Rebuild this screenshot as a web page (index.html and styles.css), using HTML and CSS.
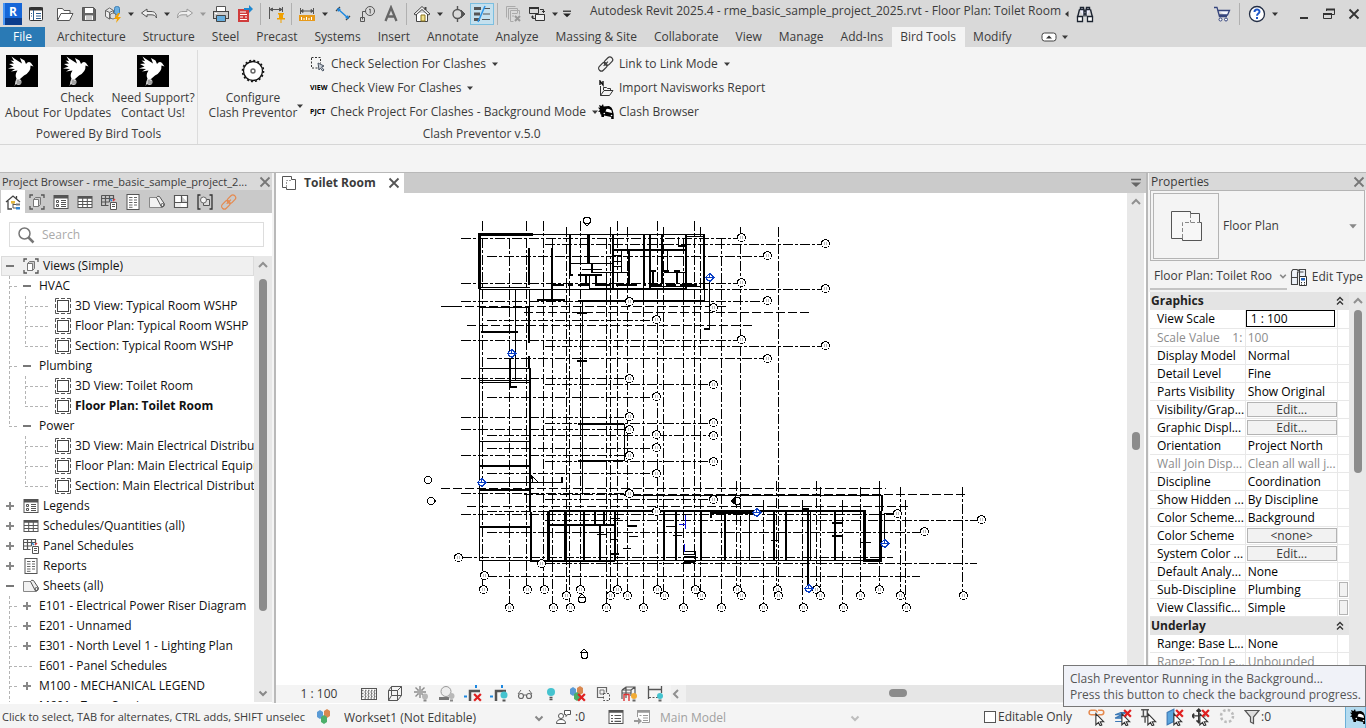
FILE: index.html
```
<!DOCTYPE html>
<html lang="en">
<head>
<meta charset="utf-8">
<title>Autodesk Revit 2025.4</title>
<link rel="stylesheet" href="styles.css">
</head>
<body>
<svg class="sprite" aria-hidden="true">
  <symbol id="caret" viewBox="0 0 8 8"><path d="M1 2.5h6L4 6z" fill="currentColor"/></symbol>
  <symbol id="chev-down" viewBox="0 0 10 10"><path d="M1.5 3.5 5 7l3.500-3.500" fill="none" stroke="#888" stroke-width="2"/></symbol>
  <symbol id="chev-up" viewBox="0 0 10 10"><path d="M1 7l4-4 4 4" fill="none" stroke="#909090" stroke-width="2"/></symbol>
  <symbol id="chev-left" viewBox="0 0 10 10"><path d="M7 1 3 5l4 4" fill="none" stroke="#909090" stroke-width="2"/></symbol>
  <symbol id="x" viewBox="0 0 12 12"><path d="M1.500 1.500l9 9M10.500 1.500l-9 9" fill="none" stroke="currentColor" stroke-width="1.800"/></symbol>
  <symbol id="cross" viewBox="0 0 16 16"><path d="M9 8l6 6M15 8l-6 6" stroke="#e02020" stroke-width="2" fill="none"/></symbol>
  <symbol id="cursor" viewBox="0 0 16 16"><path d="M7 5v10l2.300-2.200 1.500 3 1.500-.7-1.400-2.900h3z" fill="#fff" stroke="#333"/></symbol>
  <symbol id="bird" viewBox="0 0 32 32">
    <rect width="32" height="32" fill="#000"/>
    <path d="M5.500 1.500 9 4 16 8.500 14 3 18.500 5.500 20 9Q22.500 5.500 25 8L27.500 11.500 24.500 10.500Q25 17 18 20.500L14 24 10.500 28 8.500 31 10.500 23.500Q8.500 20 11.500 15.500L5 16.500 9 14 2 13.500 7.500 11.500 3 9 8 8.500 4.500 5.500 8 6z" fill="#fff"/>
    <circle cx="12.500" cy="27" r="3" fill="#ccc"/><path d="M12 25v4M14 26v3" stroke="#777"/>
  </symbol>
  <symbol id="i-panel" viewBox="0 0 16 16"><rect x="1.500" y="1.500" width="13" height="13" rx="1" fill="#fff" stroke="#333"/><path d="M1 3h14" stroke="#333" stroke-width="3"/><path d="M5.500 4v10M8 7.500h5M8 10h5M8 12.500h5M3 7.500h1M3 10h1" stroke="#2a5d90"/></symbol>
  <symbol id="i-open" viewBox="0 0 18 18"><path d="M1.500 15.500v-12h5l1.500 2h6v3M1.500 15.500 5 8.500h12l-3.500 7z" fill="#fff" stroke="#555"/></symbol>
  <symbol id="i-save" viewBox="0 0 16 16"><path d="M1.500 1.500h11l2 2v11h-13z" fill="#666" stroke="#555"/><path d="M4 2h8v5H4zM4 9.500h8V14H4z" fill="#fff"/><path d="M5 11h6M5 13h6" stroke="#999"/></symbol>
  <symbol id="i-sync" viewBox="0 0 18 18"><path d="M1.500 5.500l4-2.500 4 2.500v6l-4 2.500-4-2.500zM1.500 5.500l4 2 4-2M5.500 7.500V14" fill="#eee" stroke="#666"/><rect x="10.500" y="1.500" width="5" height="8" rx="2" fill="#6aaee0" stroke="#3c7fb5"/><circle cx="9" cy="11" r="3" fill="#ddd" stroke="#777"/><path d="M14 8l-4 6h3l-1 4 5-6h-3l2-4z" fill="#f5a300"/></symbol>
  <symbol id="i-undo" viewBox="0 0 18 18"><path d="M1.500 8 7 4v2.500h4c4 0 5.500 2 5.500 6.500-1.200-2.500-2.500-3.200-5.500-3.200H7V12z" fill="#eee" stroke="currentColor"/></symbol>
  <symbol id="i-print" viewBox="0 0 18 18"><path d="M4.500 7V1.500h9V7" fill="#fff" stroke="#555"/><rect x="1.500" y="6.500" width="15" height="7" fill="#ccc" stroke="#444"/><path d="M4.500 10.500h9v6h-9z" fill="#67aede" stroke="#444"/><path d="M3 8.500h2" stroke="#fff"/></symbol>
  <symbol id="i-pdf" viewBox="0 0 18 18"><path d="M2 4h11v13H2z" fill="#d03c3c"/><path d="M4 7h6M4 9.500h4M4 12h3M4 14.500h7M9 12h2M8 9.500h3" stroke="#fff" stroke-width="1.200"/><path d="M8 3h5V0l4 4-4 4V5H8z" fill="#1e88d0"/></symbol>
  <symbol id="i-align" viewBox="0 0 18 18"><path d="M2.500 2v12M15.500 2v5M3 4.500h12M3 4.500l2.500-1.500v3zM15 4.500l-2.500-1.500v3z" fill="#555" stroke="#555"/><path d="M11 8h6v1.500h-1V13h2v1.500h-3.500V18h-1v-3.500H10V13h2V9.500h-1z" fill="#f0a000"/></symbol>
  <symbol id="i-measure" viewBox="0 0 18 18"><path d="M2.500 3v6M15.500 3v6M3 6h12M3 6l2-1.500v3zM15 6l-2-1.500v3z" fill="#555" stroke="#555"/><path d="M1 10h16v6H1z" fill="#e79a1a"/><path d="M3.500 12v3M6 13v2M8.500 12v3M11 13v2M13.500 12v3" stroke="#fff"/></symbol>
  <symbol id="i-dim" viewBox="0 0 18 18"><path d="M4 4l10 9" stroke="#1e88e0" stroke-width="1.500"/><path d="M2 6l4-4M12 15l4-4" stroke="#444" stroke-width="1.300"/><path d="M3 3l4 1-3 3zM15 14l-4-1 3-3z" fill="#1e88e0"/></symbol>
  <symbol id="i-tag" viewBox="0 0 18 18"><circle cx="12" cy="6" r="4.500" fill="none" stroke="#555"/><path d="M11 4.500l1.200-.5v4.500M7.500 6.500h-3v8M2.500 12.500h4v4h-4z" fill="none" stroke="#555"/></symbol>
  <symbol id="i-letter" viewBox="0 0 18 18"><path d="M3.500 16 9 2.500 14.500 16M5.500 11.500h7" fill="none" stroke="#666" stroke-width="2.300"/></symbol>
  <symbol id="i-home" viewBox="0 0 18 18"><path d="M3.500 8v8.500h11V8" fill="#fff" stroke="#444"/><path d="M1 9l8-7.500L17 9l-2 1-6-5.500L3 10z" fill="#eee" stroke="#444"/><path d="M12.500 2v3" stroke="#444" stroke-width="2"/><path d="M8 10h4v6H8z" fill="#f3e38c" stroke="#8a7420"/></symbol>
  <symbol id="i-section" viewBox="0 0 18 18"><circle cx="8.500" cy="9" r="4.500" fill="none" stroke="#555" stroke-width="1.400"/><path d="M8.500 1v3.500M8.500 13.500V17" stroke="#555" stroke-width="1.400"/><path d="M12 5l4 4-4 4 1-4z" fill="#555" stroke="#555"/></symbol>
  <symbol id="i-thin" viewBox="0 0 18 18"><path d="M1 3.500h7M1 9h6M1 14.500h6" stroke="#555" stroke-width="3"/><path d="M11 3.500h6M10 9h7M9 14.500h8" stroke="#555"/><path d="M12 1 5 17" stroke="#2a94e8" stroke-width="1.500"/></symbol>
  <symbol id="i-closewin" viewBox="0 0 18 18"><path d="M2.500 12.500v-11h9M4.500 14.500v-11h9v5M6.500 5.500h9v4M6.500 5.500v11h3M8 8.500h5M8 11h2" fill="none" stroke="#aaa"/><path d="M11 11l5 5M16 11l-5 5" stroke="#999" stroke-width="2"/></symbol>
  <symbol id="i-switch" viewBox="0 0 18 18"><path d="M1.500 2.500h9v6h-9z" fill="none" stroke="#333"/><path d="M1 3h10M7 10.500h10" stroke="#333" stroke-width="2"/><path d="M7.500 9.500h9v6h-9z" fill="#eee" stroke="#333"/><path d="M12 4.500h3.500V8M4.500 10.500v3H7M3 12h3M14 6.500h3" fill="none" stroke="#333"/></symbol>
  <symbol id="i-custom" viewBox="0 0 10 10"><path d="M0 1.500h10" stroke="#222" stroke-width="1.500"/><path d="M0 4.500h10L5 9z" fill="#222"/></symbol>
  <symbol id="i-bino" viewBox="0 0 18 18"><path d="M4.500 4V2.500h3V4M10.500 4V2.500h3V4M3.500 4.500h4.500v7M14.500 4.500H10v7M3.500 4.500l-2 8M14.500 4.500l2 8M8 6h2v3H8z" fill="#eef" stroke="#1c2430" stroke-width="1.400"/><path d="M1.500 11.500h5v5h-5zM11.500 11.500h5v5h-5z" fill="#fff" stroke="#1c2430" stroke-width="1.300"/></symbol>
  <symbol id="i-cart" viewBox="0 0 18 18"><path d="M1 2.500h3l2.500 9H14M5 5.500h11.500l-2 4.500H6.500" fill="#f5f7ff" stroke="#36457c" stroke-width="1.300"/><circle cx="7.500" cy="14.500" r="1.500" fill="#fff" stroke="#36457c"/><circle cx="13" cy="14.500" r="1.500" fill="#fff" stroke="#36457c"/></symbol>
  <symbol id="i-help" viewBox="0 0 18 18"><circle cx="9" cy="9" r="7.500" fill="#fff" stroke="#222d44" stroke-width="1.300"/><path d="M6.500 7c0-3.300 5-3.300 5-.3 0 1.800-2.500 1.900-2.500 4M9 12v2" fill="none" stroke="#1f57c8" stroke-width="2"/></symbol>
  <symbol id="i-restore" viewBox="0 0 14 14"><path d="M4.500 4V2.500h8v5H10" fill="none" stroke="#333"/><path d="M4 2.500h9M1 7h9" stroke="#333" stroke-width="2"/><path d="M1.500 6.500h8v5h-8z" fill="none" stroke="#333"/></symbol>
  <symbol id="i-min" viewBox="0 0 14 14"><path d="M3 11h8" stroke="#333" stroke-width="2"/></symbol>
  <symbol id="i-pill" viewBox="0 0 16 10"><rect x="1" y="1" width="14" height="8" rx="2.500" fill="#fff" stroke="#444"/><path d="M5 6.500h6L8 3.500z" fill="#333"/></symbol>
  <symbol id="i-gear" viewBox="0 0 24 24"><circle cx="12" cy="12" r="9.500" fill="#fff" stroke="#111" stroke-width="1.300"/><circle cx="12" cy="12" r="10.500" fill="none" stroke="#111" stroke-width="1.600" stroke-dasharray="2 2.120"/><circle cx="12" cy="12" r="2" fill="none" stroke="#666" stroke-width="1.500"/></symbol>
  <symbol id="i-pick" viewBox="0 0 16 16"><path d="M1.500 2v10h7M1.500 1.500h9v6" fill="none" stroke="#333" stroke-dasharray="2 1.500"/><path d="M8 7l6 3-2.500 1 2.500 3-1.300 1-2.300-2.800L9 14z" fill="#c9ced6" stroke="#4a5563"/></symbol>
  <symbol id="i-chain" viewBox="0 0 16 16"><g transform="rotate(-45 8 8)" fill="none" stroke="currentColor" stroke-width="1.200"><rect x="-1" y="5" width="9.500" height="5.500" rx="2.700"/><rect x="7" y="5" width="9.500" height="5.500" rx="2.700"/><path d="M5 7.700h6"/></g></symbol>
  <symbol id="i-navis" viewBox="0 0 16 16"><path d="M2 5V1l3 4V1" fill="none" stroke="#111" stroke-width="1.400"/><path d="M2.500 6v9.500h9l3.500-5H6l-3.500 5M5.500 10V7.500h3l1 1h3v2" fill="none" stroke="#333"/></symbol>
  <symbol id="i-car" viewBox="0 0 16 16"><path d="M1 1l2.500 1L5 0l.7 2.500L8 2.200 11 2Q14 3 14.500 5.500l1.200 4.500v5h-2.500v-2L6 11.500V13H3.500L3 9.500l-.5 1.500-.5-3L0 7.500 2 6 0 3.500l2 .2z" fill="#000"/><path d="M7.500 7.500l1-2.500Q11 4 13.500 6.500L14 9z" fill="#fff"/><circle cx="6.300" cy="9.500" r=".8" fill="#fff"/><circle cx="13.500" cy="11.500" r=".8" fill="#fff"/></symbol>
  <symbol id="i-browse-home" viewBox="0 0 16 16"><path d="M1 8l7-6 7 6M3 7v8h4M11.500 2v3" fill="none" stroke="#444" stroke-width="1.300"/><path d="M8 8v6h3M8 10.500h3" fill="none" stroke="#555"/><path d="M6 7h4v2.500H6z" fill="#e5b93c"/><path d="M11 9.500h4v2h-4z" fill="#777"/><path d="M11 13h4v2.500h-4z" fill="#2f86d4"/></symbol>
  <symbol id="i-view" viewBox="0 0 16 16"><path d="M1 4V1h3M12 1h3v3M15 12v3h-3M4 15H1v-3" fill="none" stroke="#555" stroke-width="1.300"/><path d="M4.500 5.500l2-2h5v7l-2 2h-5z" fill="#ccc" stroke="#777"/><path d="M4.500 5.500h5v7h-5z" fill="#fff" stroke="#777"/></symbol>
  <symbol id="i-legend" viewBox="0 0 16 16"><rect x="1" y="1.500" width="14" height="13" fill="#fff" stroke="#555"/><path d="M1 3h14" stroke="#555" stroke-width="3"/><path d="M8 6.500h5M8 8.500h5M8 10.500h5M8 12.500h5" stroke="#555"/><path d="M3.500 6.500h2v2h-2zM3.500 10.500h2v2h-2z" fill="none" stroke="#555"/></symbol>
  <symbol id="i-table" viewBox="0 0 16 16"><rect x="1" y="2.500" width="14" height="11" fill="#fff" stroke="#555"/><path d="M1 3.500h14" stroke="#555" stroke-width="2.500"/><path d="M1 7.500h14M1 10.500h14M5.700 4v9.500M10.300 4v9.500" stroke="#555"/></symbol>
  <symbol id="i-panelsch" viewBox="0 0 16 16"><path d="M.5 1.500h12v5M.5 1.500v10h7M.5 4.500h12M.5 8h8M4.500 2v9.500M8.500 2v6" fill="none" stroke="#555" stroke-width="1.200"/><path d="M9 5l2 2" stroke="#2f86d4" stroke-width="1.500"/><path d="M14 5l-2 2" stroke="#e04040" stroke-width="1.500"/><path d="M9.500 8.500h6v7h-6z" fill="#fff" stroke="#555"/><path d="M11 10.500h3M11 12.500h3" stroke="#555"/></symbol>
  <symbol id="i-report" viewBox="0 0 16 16"><rect x="2" y=".5" width="12" height="15" fill="#fff" stroke="#555"/><path d="M4 3.500h3.500M9 3.500h3M4 6h3.500M9 6h3M4 8.500h3.500M9 8.500h3M4 11h3.500M9 11h3M4 13.300h3.500" stroke="#666"/></symbol>
  <symbol id="i-sheet" viewBox="0 0 16 16"><path d="M.5 13.500v-10h8l5 5v5z" fill="#f2f2f2" stroke="#888"/><path d="M7.500 3.500q1-2 3-1l5 7.500q0 3-3 3z" fill="#eee" stroke="#555"/><circle cx="13.500" cy="11" r="1.500" fill="none" stroke="#555"/></symbol>
  <symbol id="i-group" viewBox="0 0 16 16"><path d="M1.500 1.500h13v12h-13zM8.500 2v6.500h6M8.500 8.500h-7" fill="#fff" stroke="#555" stroke-width="1.200"/><path d="M2 9h6v4H2z" fill="#eee"/></symbol>
  <symbol id="i-family" viewBox="0 0 16 16"><path d="M3.500 1H1v14h2.500M12.500 1H15v14h-2.500" fill="none" stroke="#333" stroke-width="1.300"/><path d="M6.500 5.500h6v6h-6z" fill="#ddd" stroke="#555"/><circle cx="6.500" cy="6" r="3" fill="#f4f4f4" stroke="#666"/></symbol>
  <symbol id="i-leaf" viewBox="0 0 16 16"><rect x="2.500" y="2.500" width="11" height="11" fill="#fff" stroke="#444"/><path d="M.5 4V.5H4M6 .5h4M12 .5h3.500V4M15.500 6v4M15.500 12v3.500H12M10 15.500H6M4 15.500H.5V12M.5 10V6" fill="none" stroke="#555"/></symbol>
  <symbol id="i-search" viewBox="0 0 18 18"><circle cx="7.500" cy="7.500" r="5.500" fill="none" stroke="#777" stroke-width="1.500"/><path d="M11.500 11.500l5 5" stroke="#777" stroke-width="2.500"/></symbol>
  <symbol id="i-plan" viewBox="0 0 32 32"><path d="M1.500 1.500h19v2h9v9h2v18H12.500v-2H1.500z" fill="#f7f7f7" stroke="#555"/><path d="M20.500 4v8.500M12.500 28V12.500h17" fill="none" stroke="#888" stroke-dasharray="4 2"/></symbol>
  <symbol id="i-tabplan" viewBox="0 0 16 16"><path d="M1.500 1.500h9v3h4v10h-9v-2h-4z" fill="#fff" stroke="#555"/><path d="M5.500 12V5.500h5" fill="none" stroke="#999" stroke-dasharray="2 1"/></symbol>
  <symbol id="i-edittype" viewBox="0 0 18 18"><path d="M1.500 3.500l1.500-2h4l1 1 1.500-1h6v7h-2M1.500 3.500v13h6v-13M1.500 9.500h6M7.500 4h6M9.500 1.500V9" fill="#eef3fa" stroke="#444" stroke-width="1.100"/><path d="M9.500 8.500h7v9h-7z" fill="#fff" stroke="#333"/><path d="M11 10h4v2.500h-4z" fill="#1f5fb5"/><path d="M11 14.500h1M14 14.500h1M11 16.200h1M14 16.200h1" stroke="#333"/></symbol>
  <symbol id="i-dblup" viewBox="0 0 8 10"><path d="M1 4.500l3-3 3 3M1 8.500l3-3 3 3" fill="none" stroke="#333" stroke-width="1.400"/></symbol>
  <symbol id="v-detail" viewBox="0 0 18 18"><rect x="1.500" y="3.500" width="15" height="11" fill="#fff" stroke="#555"/><path d="M2 5.500h14M2 8.500h14M2 11.500h14" stroke="#777" stroke-width="1.500" stroke-dasharray="1.500 1.500"/><path d="M3 7h13M3 10h13M3 13h13" stroke="#777" stroke-width="1.500" stroke-dasharray="1.500 1.500" stroke-dashoffset="1.500"/></symbol>
  <symbol id="v-cube" viewBox="0 0 18 18"><path d="M2.500 5.500h9v10h-9zM2.500 5.500l3-4h10v9l-4 5M11.500 5.500l4-4M5.500 1.500v9h10M5.500 10.500l-3 5" fill="none" stroke="#555"/></symbol>
  <symbol id="v-sun" viewBox="0 0 18 18"><path d="M8 1v12M2 7h12M3.500 2.500l9 9M12.500 2.500l-9 9" stroke="#8c8c8c" stroke-width="1.400"/><circle cx="8" cy="7" r="3" fill="#aaa"/><circle cx="13" cy="11.500" r="3" fill="#b8b8b8"/><path d="M11.500 15.500h3" stroke="#888" stroke-width="2"/></symbol>
  <symbol id="v-shadow" viewBox="0 0 18 18"><circle cx="8" cy="6.500" r="5" fill="#eee" stroke="#999"/><path d="M1 13.500h10" stroke="#777" stroke-width="3"/><circle cx="13.500" cy="11" r="3" fill="#b8b8b8"/><path d="M12 15.500h3" stroke="#888" stroke-width="2"/></symbol>
  <symbol id="v-crop" viewBox="0 0 18 18"><path d="M6 16V6h10" fill="none" stroke="#555" stroke-width="2.500"/><path d="M0 11.500h3M12 0v3" stroke="#1e88e0" stroke-width="2"/></symbol>
  <symbol id="v-bulb" viewBox="0 0 18 18"><circle cx="9" cy="7" r="4" fill="#45c3cf"/><path d="M7.500 12.500h3M7.500 14.500h3" stroke="#555" stroke-width="1.500"/></symbol>
  <symbol id="v-glasses" viewBox="0 0 18 18"><path d="M5 5l-3 4M13 5l3 4M7.500 10.500q1.500-1.500 3 0" fill="none" stroke="#666"/><circle cx="5" cy="11" r="2.500" fill="none" stroke="#666" stroke-width="1.200"/><circle cx="13" cy="11" r="2.500" fill="none" stroke="#666" stroke-width="1.200"/></symbol>
  <symbol id="v-worksets" viewBox="0 0 18 18"><path d="M2 4l3-2 3 2v5l-3 2-3-2z" fill="#5b9bd5"/><path d="M9 3l3-2 3 2v5l-3 2-3-2z" fill="#d98850"/><path d="M6 9l3-2 3 2v5l-3 2-3-2z" fill="#4caf6a"/></symbol>
  <symbol id="v-rect" viewBox="0 0 18 18"><path d="M9.500 12.500h-6v-10h9v5" fill="none" stroke="#666" stroke-width="1.200"/><path d="M6 5h4v4H6z" fill="none" stroke="#777"/><path d="M9.500 8.500h6v7h-6z" fill="none" stroke="#555" stroke-dasharray="2 1.500"/></symbol>
  <symbol id="v-analytic" viewBox="0 0 18 18"><path d="M2 5l4-3h9v8M2 5v9M2 5h9v6M11 5l4-3M6 2v3M2 8h9M6 5v8" fill="none" stroke="#555" stroke-width="1.200"/><path d="M4 9v7M9 9v7M4 9.500h5" stroke="#d33" stroke-width="1.400"/><circle cx="14" cy="11" r="3" fill="#f3ac35"/><path d="M12.500 15.500h3" stroke="#666" stroke-width="2"/></symbol>
  <symbol id="v-constraint" viewBox="0 0 18 18"><path d="M2.500 1v13M15.500 1v7M3 4.500h12" fill="none" stroke="#555" stroke-width="1.300"/><path d="M3 12.500h9" stroke="#555" stroke-dasharray="2 1.500"/><circle cx="14" cy="11" r="3" fill="#45c3cf"/><path d="M12.500 15.500h3" stroke="#666" stroke-width="2"/></symbol>
  <symbol id="s-person" viewBox="0 0 16 16"><circle cx="5" cy="7" r="2.500" fill="#fff" stroke="#555"/><path d="M.5 14.500q0-4 4.500-4t4.500 4zM8.500 1.500h6v4h-3l-1.500 2v-2h-1.500z" fill="#fff" stroke="#555"/></symbol>
  <symbol id="s-list" viewBox="0 0 16 16"><rect x="1" y="1.500" width="14" height="13" fill="#fff" stroke="currentColor"/><path d="M1 2.500h14" stroke="currentColor" stroke-width="2.500"/><path d="M3 6.500h2M6.500 6.500H13M3 9.500h2M6.500 9.500H13M3 12.300h2M6.500 12.300H13" stroke="currentColor" stroke-width="1.200"/></symbol>
  <symbol id="s-listpick" viewBox="0 0 16 16"><path d="M3.500 8V1.500h12v12H8" fill="#fff" stroke="currentColor"/><path d="M3 2.500h13" stroke="currentColor" stroke-width="2.500"/><path d="M5.500 6.500h2M9 6.500h5M9 9h5M9 11.500h5" stroke="currentColor" stroke-width="1.200"/><path d="M0 11h4V8.500L8 12l-4 3.500V13H0z" fill="currentColor"/></symbol>
  <symbol id="s-links" viewBox="0 0 16 16"><path d="M7 6H3q-2 0-2-2t2-2h3q2 0 2 2M9 6h3q2 0 2-2t-2-2H9" fill="none" stroke="#e58a50" stroke-width="1.400"/></symbol>
  <symbol id="s-under" viewBox="0 0 16 16"><path d="M1 6l5-2h5l-4 2zM1 9l4-2h6l-4 2zM1 12h6" fill="#5b9bd5" stroke="#3c78b5"/></symbol>
  <symbol id="s-pin" viewBox="0 0 16 16"><path d="M1 1.500h7M3 2v5M6.500 2v5M1 7.500h8M4.500 8v5" fill="none" stroke="#555" stroke-width="1.300"/></symbol>
  <symbol id="s-face" viewBox="0 0 16 16"><path d="M1 4l6-3v11l-6 3z" fill="#5ba5dc" stroke="#3c78b5"/></symbol>
  <symbol id="s-drag" viewBox="0 0 16 16"><path d="M6 1v12M0 7h12M4 3l2-2 2 2M4 11l2 2 2-2M2 5L0 7l2 2" fill="none" stroke="#333" stroke-width="1.300"/></symbol>
  <symbol id="s-spin" viewBox="0 0 16 16"><circle cx="8" cy="8" r="6" fill="none" stroke="#bbb" stroke-width="2.500" stroke-dasharray="2.500 2.212"/></symbol>
  <symbol id="s-filter" viewBox="0 0 16 16"><path d="M1 1.500h14L9.500 8v6.500l-3-1.500V8z" fill="#ddd" stroke="#555" stroke-width="1.200"/></symbol>
  <symbol id="grid-head" viewBox="-5.500 -5.500 10 10"><circle r="4" fill="#fff" stroke="#000"/><path d="M-1-1.500v3M1-1.500v3" stroke="#bbb"/></symbol>
  <symbol id="blue-head" viewBox="-5.500 -5.500 11 11"><path d="M0-5l5 5-5 5-5-5z" fill="#0b3fc4"/><circle r="3" fill="#fff" stroke="#0b3fc4"/><path d="M-4 0H4M0-4v4" stroke="#0b3fc4"/></symbol>
</svg>

<header class="titlebar">
  <div class="qat">
    <button class="tool logo" aria-label="Revit menu"><span class="logo-tile">R</span></button>
    <button class="tool" aria-label="Home view"><svg class="i16"><use href="#i-panel"/></svg></button>
    <button class="tool first-file" aria-label="Open"><svg class="i18"><use href="#i-open"/></svg></button>
    <button class="tool" aria-label="Save"><svg class="i16"><use href="#i-save"/></svg></button>
    <button class="tool" aria-label="Synchronize"><svg class="i18"><use href="#i-sync"/></svg></button>
    <button class="drop" aria-label="Synchronize options"><svg class="i8"><use href="#caret"/></svg></button>
    <button class="tool" aria-label="Undo"><svg class="i18"><use href="#i-undo"/></svg></button>
    <button class="drop" aria-label="Undo list"><svg class="i8"><use href="#caret"/></svg></button>
    <button class="tool faded" aria-label="Redo"><svg class="i18 flip"><use href="#i-undo"/></svg></button>
    <button class="drop dim" aria-label="Redo list"><svg class="i8"><use href="#caret"/></svg></button>
    <button class="tool" aria-label="Print"><svg class="i18"><use href="#i-print"/></svg></button>
    <button class="tool" aria-label="Export PDF"><svg class="i18"><use href="#i-pdf"/></svg></button>
    <span class="sep"></span>
    <button class="tool" aria-label="Pin dimension"><svg class="i18"><use href="#i-align"/></svg></button>
    <span class="sep"></span>
    <button class="tool" aria-label="Measure"><svg class="i18"><use href="#i-measure"/></svg></button>
    <button class="drop" aria-label="Measure options"><svg class="i8"><use href="#caret"/></svg></button>
    <button class="tool" aria-label="Aligned dimension"><svg class="i18"><use href="#i-dim"/></svg></button>
    <button class="tool" aria-label="Tag"><svg class="i18"><use href="#i-tag"/></svg></button>
    <button class="tool" aria-label="Text"><svg class="i18"><use href="#i-letter"/></svg></button>
    <span class="sep"></span>
    <button class="tool" aria-label="3D view"><svg class="i18"><use href="#i-home"/></svg></button>
    <button class="drop" aria-label="3D options"><svg class="i8"><use href="#caret"/></svg></button>
    <button class="tool" aria-label="Section"><svg class="i18"><use href="#i-section"/></svg></button>
    <button class="tool active" aria-label="Thin lines"><svg class="i18"><use href="#i-thin"/></svg></button>
    <span class="sep"></span>
    <button class="tool" aria-label="Close inactive"><svg class="i18"><use href="#i-closewin"/></svg></button>
    <button class="tool" aria-label="Switch windows"><svg class="i18"><use href="#i-switch"/></svg></button>
    <button class="drop" aria-label="Window list"><svg class="i8"><use href="#caret"/></svg></button>
    <button class="drop" aria-label="Customize"><svg class="i8"><use href="#i-custom"/></svg></button>
  </div>
  <h1 class="app-title">Autodesk Revit 2025.4 - rme_basic_sample_project_2025.rvt - Floor Plan: Toilet Room</h1>
  <button class="drop back" aria-label="Collapse search"><svg class="i8 left"><use href="#caret"/></svg></button>
  <button class="tool" aria-label="Search"><svg class="i18"><use href="#i-bino"/></svg></button>
  <div class="window-tools">
    <button class="tool" aria-label="Store"><svg class="i18"><use href="#i-cart"/></svg></button>
    <span class="sep wide"></span>
    <button class="tool" aria-label="Help"><svg class="i18"><use href="#i-help"/></svg></button>
    <button class="drop" aria-label="Help options"><svg class="i8"><use href="#caret"/></svg></button>
    <button class="tool win first-win" aria-label="Minimize"><svg class="i14"><use href="#i-min"/></svg></button>
    <button class="tool win" aria-label="Restore"><svg class="i14"><use href="#i-restore"/></svg></button>
    <button class="tool win" aria-label="Close"><svg class="i12"><use href="#x"/></svg></button>
  </div>
</header>

<nav class="tabs">
  <button class="file-tab">File</button>
  <button>Architecture</button><button>Structure</button><button>Steel</button><button>Precast</button><button>Systems</button><button>Insert</button><button>Annotate</button><button>Analyze</button><button>Massing &amp; Site</button><button>Collaborate</button><button>View</button><button>Manage</button><button>Add-Ins</button><button class="current">Bird Tools</button><button>Modify</button>
  <button class="ribbon-toggle" aria-label="Minimize ribbon"><svg class="pill"><use href="#i-pill"/></svg><svg class="i8"><use href="#caret"/></svg></button>
</nav>

<section class="ribbon">
  <div class="panel panel-powered">
    <div class="panel-body">
      <button class="big about"><svg class="i32"><use href="#bird"/></svg><span><br>About</span></button>
      <button class="big updates"><svg class="i32"><use href="#bird"/></svg><span>Check<br>For Updates</span></button>
      <button class="big support"><svg class="i32"><use href="#bird"/></svg><span>Need Support?<br>Contact Us!</span></button>
    </div>
    <div class="panel-title">Powered By Bird Tools</div>
  </div>
  <div class="panel panel-clash">
    <div class="panel-body">
      <button class="big configure"><svg class="i32 gear"><use href="#i-gear"/></svg><span>Configure<br>Clash Preventor</span></button>
      <span class="config-drop"><svg class="i8"><use href="#caret"/></svg></span>
      <div class="stack stack-checks">
        <button class="small"><svg class="i16"><use href="#i-pick"/></svg>Check Selection For Clashes<svg class="i8"><use href="#caret"/></svg></button>
        <button class="small"><b class="word">VIEW</b>Check View For Clashes<svg class="i8"><use href="#caret"/></svg></button>
        <button class="small"><b class="word">PJCT</b>Check Project For Clashes - Background Mode<svg class="i8"><use href="#caret"/></svg></button>
      </div>
      <div class="stack">
        <button class="small"><svg class="i16"><use href="#i-chain"/></svg>Link to Link Mode<svg class="i8"><use href="#caret"/></svg></button>
        <button class="small"><svg class="i16"><use href="#i-navis"/></svg>Import Navisworks Report</button>
        <button class="small"><svg class="i16"><use href="#i-car"/></svg>Clash Browser</button>
      </div>
    </div>
    <div class="panel-title">Clash Preventor v.5.0</div>
  </div>
</section>
<div class="options-bar"></div>

<main class="workspace">
  <aside class="browser">
    <div class="dock-title long-title"><span>Project Browser - rme_basic_sample_project_2...</span><button aria-label="Close browser"><svg class="i12"><use href="#x"/></svg></button></div>
    <div class="browser-tabs">
      <button class="on" aria-label="All"><svg class="i16"><use href="#i-browse-home"/></svg></button>
      <button aria-label="Views"><svg class="i16"><use href="#i-view"/></svg></button>
      <button aria-label="Legends"><svg class="i16"><use href="#i-legend"/></svg></button>
      <button aria-label="Schedules"><svg class="i16"><use href="#i-table"/></svg></button>
      <button aria-label="Panel Schedules"><svg class="i16"><use href="#i-panelsch"/></svg></button>
      <button aria-label="Reports"><svg class="i16"><use href="#i-report"/></svg></button>
      <button aria-label="Sheets"><svg class="i16"><use href="#i-sheet"/></svg></button>
      <button aria-label="Groups"><svg class="i16"><use href="#i-group"/></svg></button>
      <button aria-label="Families"><svg class="i16"><use href="#i-family"/></svg></button>
      <button class="orange" aria-label="Links"><svg class="i16"><use href="#i-chain"/></svg></button>
    </div>
    <label class="search"><svg class="i18"><use href="#i-search"/></svg><input type="text" placeholder="Search" aria-label="Search"></label>
    <div class="tree-wrap">
      <ul class="tree">
        <li class="row selected"><i class="tog root minus"></i><svg class="i16"><use href="#i-view"/></svg><span>Views (Simple)</span></li>
        <li class="row"><i class="g1 v h"></i><i class="tog minus"></i><span>HVAC</span></li>
        <li class="row"><i class="g1 v"></i><i class="g2 v h"></i><svg class="i16"><use href="#i-leaf"/></svg><span>3D View: Typical Room WSHP</span></li>
        <li class="row"><i class="g1 v"></i><i class="g2 v h"></i><svg class="i16"><use href="#i-leaf"/></svg><span>Floor Plan: Typical Room WSHP</span></li>
        <li class="row"><i class="g1 v"></i><i class="g2 end h"></i><svg class="i16"><use href="#i-leaf"/></svg><span>Section: Typical Room WSHP</span></li>
        <li class="row"><i class="g1 v h"></i><i class="tog minus"></i><span>Plumbing</span></li>
        <li class="row"><i class="g1 v"></i><i class="g2 v h"></i><svg class="i16"><use href="#i-leaf"/></svg><span>3D View: Toilet Room</span></li>
        <li class="row"><i class="g1 v"></i><i class="g2 end h"></i><svg class="i16"><use href="#i-leaf"/></svg><span class="open-view">Floor Plan: Toilet Room</span></li>
        <li class="row"><i class="g1 end h"></i><i class="tog minus"></i><span>Power</span></li>
        <li class="row"><i class="g1"></i><i class="g2 v h"></i><svg class="i16"><use href="#i-leaf"/></svg><span>3D View: Main Electrical Distributi</span></li>
        <li class="row"><i class="g1"></i><i class="g2 v h"></i><svg class="i16"><use href="#i-leaf"/></svg><span>Floor Plan: Main Electrical Equipm</span></li>
        <li class="row"><i class="g1"></i><i class="g2 end h"></i><svg class="i16"><use href="#i-leaf"/></svg><span>Section: Main Electrical Distributio</span></li>
        <li class="row"><i class="tog root plus"></i><svg class="i16"><use href="#i-legend"/></svg><span>Legends</span></li>
        <li class="row"><i class="tog root plus"></i><svg class="i16"><use href="#i-table"/></svg><span>Schedules/Quantities (all)</span></li>
        <li class="row"><i class="tog root plus"></i><svg class="i16"><use href="#i-panelsch"/></svg><span>Panel Schedules</span></li>
        <li class="row"><i class="tog root plus"></i><svg class="i16"><use href="#i-report"/></svg><span>Reports</span></li>
        <li class="row"><i class="tog root minus"></i><svg class="i16"><use href="#i-sheet"/></svg><span>Sheets (all)</span></li>
        <li class="row"><i class="g1 v h"></i><i class="tog plus"></i><span>E101 - Electrical Power Riser Diagram</span></li>
        <li class="row"><i class="g1 v h"></i><i class="tog plus"></i><span>E201 - Unnamed</span></li>
        <li class="row"><i class="g1 v h"></i><i class="tog plus"></i><span>E301 - North Level 1 - Lighting Plan</span></li>
        <li class="row"><i class="g1 long v h"></i><span>E601 - Panel Schedules</span></li>
        <li class="row"><i class="g1 v h"></i><i class="tog plus"></i><span>M100 - MECHANICAL LEGEND</span></li>
        <li class="row"><i class="g1 v h"></i><i class="tog plus"></i><span>M601 - Zone Services</span></li>
      </ul>
      <div class="vbar tree-bar"><svg class="i10"><use href="#chev-up"/></svg><i class="thumb tree-thumb"></i><svg class="i10 last"><use href="#chev-down"/></svg></div>
    </div>
  </aside>

  <section class="document">
    <div class="doc-tabs">
      <div class="doc-tab"><svg class="i16"><use href="#i-tabplan"/></svg><b>Toilet Room</b><button aria-label="Close view"><svg class="i12"><use href="#x"/></svg></button></div>
      <button class="doc-menu" aria-label="Open views"><svg class="i10"><use href="#i-custom"/></svg></button>
    </div>
    <div class="doc-body">
      <div class="canvas">
        <svg class="drawing" width="850" height="492" viewBox="277 193 850 492" role="img" aria-label="Floor plan">
          <g class="gridlines">
            <path d="M482.500 221V585M526.500 221V585M543.500 221V585M580.500 221V585M617.500 221V585M657.500 221V585M694.500 221V585M736.500 481V585M776.500 481V585M816.500 481V585M879.500 481V585"/>
            <path d="M566.500 227V591M610.500 227V591M627.500 227V591M663.500 227V591M700.500 227V591M740.500 227V591M778.500 227V591M820.500 487V591M860.500 487V591M900.500 487V591M962.500 487V591"/>
            <path d="M509.500 239V603M552.500 239V603M569.500 235V603M606.500 239V603M643.500 239V603M683.500 239V603M721.500 239V603M763.500 500V603M802.500 500V603M842.500 500V603M905.500 500V603"/>
            <path d="M461 238.500H737M461 283.500H737M461 301.500H763M461 340.500H737M461 378.500H625M461 417.500H625M461 429.500H625M461 455.500H625M461 493.500H625M461 514.500H894M462 557.500H893"/>
            <path d="M545 244.500H822M545 289.500H822M545 346.500H822M545 384.500H710M545 423.500H710M545 461.500H710M545 499.500H710M545 520.500H977M545 563.500H977"/>
            <path d="M487 256.500H763M487 320.500H653M487 358.500H763M487 397.500H653M487 435.500H710M487 448.500H653M487 473.500H653M487 511.500H653M487 532.500H920M487 576.500H920"/>
          </g>
          <path class="levels" d="M441 306.500H727M524 312.500H811M467 325.500H753M441 488.500H886M524 494.500H968M467 506.500H911"/>
          <path class="w1" d="M441 306.500h17M533 234.500H705M479.500 289V560.500H531M479 287.500H530M479 289.500H704M515.500 289V380M529.500 289V307M479 307.500H529M479 368.500H530M479 380.500H529M479 382.500H529M570 263.500H613M582 269.500H602M591 272.500H628M589.500 275V289M621.500 250V272M613 255.500H621M613 261.500H621M613 266.500H621M582.500 301V495M704.500 289V301M664 272.500H685M650 286.500H700M686 236.500H704M709.500 282V329M678.500 237V247M667.500 250V272M624.500 424V460H602M480 441.500H530M481 482.500H562M615 560.500H864M624 495.500H882V511M749.500 511V560M810.500 511V560M611 518.500H620M629 536.500H638M623 548.500H631M597 534.500H606M611 539.500H618M666 526.500H676M673 535.500H682M684 551.500H695V562M684 554.500H695M861 542.500H871M771 540.500H779M884 513.500V540M884 513.500H893M879.500 485V511"/>
          <path class="w2" d="M529 248V285M529 307V343M529 356V368M552 248V300M537 300H565M551 285H564M568 285H573M570 234V275M592 264V273M570 275H573M578 275H602M586 275V285M596 275V285M578 285H590M595 285H611M616 285H637M613 235V288M613 250H686M629 250V285M590 289H686M578 301H704M577 313H587M577 361H587M644 235V285M650 235V288M662 235V283M686 235V289M704 235V289M678 246H686M653 271V284M677 271V284M650 271H656M663 271H669M674 271H680M643 285H646M650 285H662M666 285H676M680 285H697M704 329H710M481 332H518M510 358V388M510 387H517M530 368V512M531 512V561H615M578 424H624M578 461H602M480 466H530M480 490H529M480 527H531M562 477V483M584 511V560M595 511V524M604 511V524M549 525H615M600 525V560M615 511V560M664 511V560M676 511V560M701 511V560M725 511V560M774 511V560M786 511V560M835 511V560M627 526H637M611 554H619M684 557H695M684 562H695M808 508V586M802 509H808M711 513H755M711 512V518M832 523H842M832 536H842M882 495V511M549 511H864"/>
          <path class="w3" d="M479.500 289V234.500H533M588.500 235V264M548.500 511V560M565.500 511V560M864.500 510V560.500H880.500V511"/>
          <path class="blue" d="M685.500 515V529M679 524.500H686M684.500 544V552"/>
          <g class="heads">
            <use href="#grid-head" x="478" y="584" width="10" height="10"/><use href="#grid-head" x="522" y="584" width="10" height="10"/><use href="#grid-head" x="539" y="584" width="10" height="10"/><use href="#grid-head" x="575" y="584" width="10" height="10"/><use href="#grid-head" x="612" y="584" width="10" height="10"/><use href="#grid-head" x="652" y="584" width="10" height="10"/><use href="#grid-head" x="690" y="584" width="10" height="10"/><use href="#grid-head" x="732" y="584" width="10" height="10"/><use href="#grid-head" x="772" y="584" width="10" height="10"/><use href="#grid-head" x="811" y="584" width="10" height="10"/><use href="#grid-head" x="874" y="584" width="10" height="10"/>
            <use href="#grid-head" x="561" y="590" width="10" height="10"/><use href="#grid-head" x="605" y="590" width="10" height="10"/><use href="#grid-head" x="622" y="590" width="10" height="10"/><use href="#grid-head" x="659" y="590" width="10" height="10"/><use href="#grid-head" x="696" y="590" width="10" height="10"/><use href="#grid-head" x="736" y="590" width="10" height="10"/><use href="#grid-head" x="773" y="590" width="10" height="10"/><use href="#grid-head" x="815" y="590" width="10" height="10"/><use href="#grid-head" x="855" y="590" width="10" height="10"/><use href="#grid-head" x="895" y="590" width="10" height="10"/><use href="#grid-head" x="958" y="590" width="10" height="10"/>
            <use href="#grid-head" x="504" y="602" width="10" height="10"/><use href="#grid-head" x="548" y="602" width="10" height="10"/><use href="#grid-head" x="565" y="602" width="10" height="10"/><use href="#grid-head" x="601" y="602" width="10" height="10"/><use href="#grid-head" x="638" y="602" width="10" height="10"/><use href="#grid-head" x="678" y="602" width="10" height="10"/><use href="#grid-head" x="716" y="602" width="10" height="10"/><use href="#grid-head" x="758" y="602" width="10" height="10"/><use href="#grid-head" x="798" y="602" width="10" height="10"/><use href="#grid-head" x="838" y="602" width="10" height="10"/><use href="#grid-head" x="901" y="602" width="10" height="10"/>
            <use href="#grid-head" x="736" y="232" width="10" height="10"/><use href="#grid-head" x="820" y="238" width="10" height="10"/><use href="#grid-head" x="762" y="250" width="10" height="10"/><use href="#grid-head" x="736" y="277" width="10" height="10"/><use href="#grid-head" x="820" y="283" width="10" height="10"/><use href="#grid-head" x="762" y="295" width="10" height="10"/><use href="#grid-head" x="624" y="296" width="10" height="10"/><use href="#grid-head" x="708" y="302" width="10" height="10"/><use href="#grid-head" x="651" y="314" width="10" height="10"/><use href="#grid-head" x="736" y="334" width="10" height="10"/><use href="#grid-head" x="820" y="340" width="10" height="10"/><use href="#grid-head" x="762" y="353" width="10" height="10"/>
            <use href="#grid-head" x="624" y="373" width="10" height="10"/><use href="#grid-head" x="708" y="379" width="10" height="10"/><use href="#grid-head" x="651" y="391" width="10" height="10"/><use href="#grid-head" x="624" y="411" width="10" height="10"/><use href="#grid-head" x="708" y="417" width="10" height="10"/><use href="#grid-head" x="624" y="424" width="10" height="10"/><use href="#grid-head" x="651" y="429" width="10" height="10"/><use href="#grid-head" x="708" y="430" width="10" height="10"/><use href="#grid-head" x="651" y="442" width="10" height="10"/><use href="#grid-head" x="624" y="450" width="10" height="10"/><use href="#grid-head" x="708" y="456" width="10" height="10"/><use href="#grid-head" x="651" y="468" width="10" height="10"/><use href="#grid-head" x="624" y="488" width="10" height="10"/><use href="#grid-head" x="708" y="494" width="10" height="10"/><use href="#grid-head" x="651" y="506" width="10" height="10"/>
            <use href="#grid-head" x="892" y="508" width="10" height="10"/><use href="#grid-head" x="976" y="514" width="10" height="10"/><use href="#grid-head" x="919" y="526" width="10" height="10"/><use href="#grid-head" x="453" y="552" width="10" height="10"/><use href="#grid-head" x="536" y="558" width="10" height="10"/><use href="#grid-head" x="479" y="570" width="10" height="10"/>
          </g>
          <g class="elevations"><circle cx="587" cy="220.500" r="3.500"/><path d="M584.500 223h5l-2.500 3z"/><circle cx="428" cy="480" r="3.500"/><circle cx="431" cy="501" r="3.500"/><path d="M434 499v4l2-2z"/><circle cx="582" cy="599.500" r="3.500"/><path d="M579 597l3-3 3 3z"/><circle cx="584.500" cy="655" r="3.500"/><path d="M581 652l3-3 3 3z"/><circle cx="737.500" cy="501" r="3.500"/><path class="solid" d="M735 497v7l-4-3z"/><path class="solid" d="M530 474l7 7h-4z"/><path d="M533 477l5 5h-6z"/></g>
          <use href="#blue-head" x="704" y="272" width="11" height="11"/><use href="#blue-head" x="506" y="348" width="11" height="11"/><use href="#blue-head" x="476" y="477" width="11" height="11"/><use href="#blue-head" x="751" y="507" width="11" height="11"/><use href="#blue-head" x="879" y="538" width="11" height="11"/><use href="#blue-head" x="803" y="583" width="11" height="11"/>
        </svg>
      </div>
      <div class="vbar canvas-bar"><svg class="i10"><use href="#chev-up"/></svg><i class="thumb canvas-thumb"></i></div>
    </div>
    <div class="viewbar">
      <button class="scale">1 : 100</button>
      <button aria-label="Detail level"><svg class="i18"><use href="#v-detail"/></svg></button>
      <button aria-label="Visual style"><svg class="i18"><use href="#v-cube"/></svg></button>
      <button aria-label="Sun path"><svg class="i18"><use href="#v-sun"/></svg></button>
      <button aria-label="Shadows"><svg class="i18"><use href="#v-shadow"/></svg></button>
      <button aria-label="Crop view"><svg class="i18"><use href="#v-crop"/><use href="#cross"/></svg></button>
      <button aria-label="Crop region"><svg class="i18" viewBox="0 0 18 18"><use href="#v-crop" width="18" height="18"/><circle cx="14" cy="10" r="3.500" fill="#45c3cf"/><path d="M12.500 15.500h3" stroke="#555" stroke-width="2"/></svg></button>
      <button aria-label="Temporary hide"><svg class="i18"><use href="#v-glasses"/></svg></button>
      <button aria-label="Reveal hidden"><svg class="i18"><use href="#v-bulb"/></svg></button>
      <button aria-label="Worksharing display"><svg class="i18"><use href="#v-worksets"/><use href="#cross"/></svg></button>
      <button aria-label="Temporary properties"><svg class="i18"><use href="#v-rect"/></svg></button>
      <button aria-label="Analytical model"><svg class="i18"><use href="#v-analytic"/></svg></button>
      <button aria-label="Reveal constraints"><svg class="i18"><use href="#v-constraint"/></svg></button>
      <div class="hbar"><svg class="i10"><use href="#chev-left"/></svg><div class="htrack"><i class="hthumb"></i></div></div>
    </div>
  </section>

  <aside class="properties">
    <div class="dock-title"><span>Properties</span><button aria-label="Close properties"><svg class="i12"><use href="#x"/></svg></button></div>
    <div class="type-box">
      <div class="type-thumb"><svg class="i32"><use href="#i-plan"/></svg></div>
      <select aria-label="Type"><option>Floor Plan</option></select>
      <svg class="i10"><use href="#caret"/></svg>
    </div>
    <div class="instance">
      <div class="instance-pick"><select aria-label="Instance"><option>Floor Plan: Toilet Roo</option></select><svg class="i8"><use href="#chev-down"/></svg></div>
      <button class="edit-type"><svg class="i18"><use href="#i-edittype"/></svg>Edit Type</button>
    </div>
    <div class="props-wrap">
      <table class="props">
        <colgroup><col class="c-name"><col class="c-value"><col class="c-link"></colgroup>
        <tr class="section"><th colspan="2">Graphics</th><th><svg class="dbl"><use href="#i-dblup"/></svg></th></tr>
        <tr><td>View Scale</td><td><input type="text" value="1 : 100" aria-label="View Scale"></td><td></td></tr>
        <tr class="off"><td>Scale Value &nbsp;&nbsp; 1:</td><td>100</td><td></td></tr>
        <tr><td>Display Model</td><td>Normal</td><td></td></tr>
        <tr><td>Detail Level</td><td>Fine</td><td></td></tr>
        <tr><td>Parts Visibility</td><td>Show Original</td><td></td></tr>
        <tr><td>Visibility/Grap...</td><td><button>Edit...</button></td><td></td></tr>
        <tr><td>Graphic Displ...</td><td><button>Edit...</button></td><td></td></tr>
        <tr><td>Orientation</td><td>Project North</td><td></td></tr>
        <tr class="off"><td>Wall Join Disp...</td><td>Clean all wall j...</td><td></td></tr>
        <tr><td>Discipline</td><td>Coordination</td><td></td></tr>
        <tr><td>Show Hidden ...</td><td>By Discipline</td><td></td></tr>
        <tr><td>Color Scheme...</td><td>Background</td><td></td></tr>
        <tr><td>Color Scheme</td><td><button>&lt;none&gt;</button></td><td></td></tr>
        <tr><td>System Color ...</td><td><button>Edit...</button></td><td></td></tr>
        <tr><td>Default Analy...</td><td>None</td><td></td></tr>
        <tr><td>Sub-Discipline</td><td>Plumbing</td><td><button aria-label="Associate"></button></td></tr>
        <tr><td>View Classific...</td><td>Simple</td><td><button aria-label="Associate"></button></td></tr>
        <tr class="section"><th colspan="2">Underlay</th><th><svg class="dbl"><use href="#i-dblup"/></svg></th></tr>
        <tr><td>Range: Base L...</td><td>None</td><td></td></tr>
        <tr class="off"><td>Range: Top Le...</td><td>Unbounded</td><td></td></tr>
      </table>
      <div class="vbar props-bar"><svg class="i10"><use href="#chev-up"/></svg><i class="thumb props-thumb"></i></div>
    </div>
  </aside>
</main>

<footer class="status">
  <div class="hint">Click to select, TAB for alternates, CTRL adds, SHIFT unselec</div>
  <svg class="i18"><use href="#v-worksets"/></svg>
  <div class="pick workset"><select aria-label="Active workset"><option>Workset1 (Not Editable)</option></select><svg class="i10"><use href="#chev-down"/></svg></div>
  <span class="count requests"><svg class="i16"><use href="#s-person"/></svg>:0</span>
  <button class="st" aria-label="Design options"><svg class="i16"><use href="#s-list"/></svg></button>
  <button class="st gray" aria-label="Pick to edit"><svg class="i16"><use href="#s-listpick"/></svg></button>
  <div class="pick model"><select disabled aria-label="Design option"><option>Main Model</option></select><svg class="i10 pale"><use href="#chev-down"/></svg></div>
  <label class="editable"><input type="checkbox">Editable Only</label>
  <div class="selectors">
    <button aria-label="Select links"><svg class="i18"><use href="#s-links"/><use href="#cursor"/></svg></button>
    <button aria-label="Select underlay"><svg class="i18"><use href="#s-under"/><use href="#cursor"/><use href="#cross" y="-7"/></svg></button>
    <button aria-label="Select pinned"><svg class="i18"><use href="#s-pin"/><use href="#cursor"/></svg></button>
    <button aria-label="Select by face"><svg class="i18"><use href="#s-face"/><use href="#cursor"/><use href="#cross" y="-7"/></svg></button>
    <button aria-label="Drag on selection"><svg class="i18"><use href="#s-drag"/><use href="#cursor"/><use href="#cross" y="-7"/></svg></button>
    <button aria-label="Background processes"><svg class="i16"><use href="#s-spin"/></svg></button>
  </div>
  <span class="count filter"><svg class="i16"><use href="#s-filter"/></svg>:0</span>
  <button class="progress" aria-label="Background progress"><svg class="i16"><use href="#i-car"/></svg></button>
  <div class="tooltip" role="tooltip">Clash Preventor Running in the Background...<br>Press this button to check the background progress.</div>
</footer>
</body>
</html>
```
FILE: styles.css
```
* { box-sizing: border-box; }
body {
  margin: 0; height: 100vh; display: flex; flex-direction: column; overflow: hidden;
  background: #f4f4f4; color: #3b3b3b;
  font: 12px/16px "Open Sans", "Noto Sans", sans-serif;
}
button, input, select { font: inherit; color: inherit; margin: 0; padding: 0; border: 0; background: none; border-radius: 0; }
select { appearance: none; outline: 0; }
svg { display: block; flex: none; }
.sprite { width: 0; height: 0; position: absolute; }
.i8 { width: 8px; height: 8px; } .i10 { width: 10px; height: 10px; } .i12 { width: 12px; height: 12px; }
.i14 { width: 14px; height: 14px; } .i16 { width: 16px; height: 16px; } .i18 { width: 18px; height: 18px; } .i32 { width: 32px; height: 32px; }
.flip { transform: scaleX(-1); }
.left { transform: rotate(90deg); }

/* title bar */
.titlebar { display: flex; align-items: center; height: 27px; background: #d9d9d9; flex: none; }
.qat { display: flex; align-items: center; }
.tool { width: 24px; height: 22px; display: flex; align-items: center; justify-content: center; color: #555; }
.drop { width: 12px; height: 22px; display: flex; align-items: center; justify-content: center; color: #333; }
.dim, .faded { color: #999; }
.sep { width: 7px; height: 22px; display: flex; justify-content: center; }
.sep::before { content: ""; width: 1px; height: 100%; background: #b0b0b0; }
.sep.wide { width: 11px; }
.logo-tile { width: 19px; height: 22px; background: linear-gradient(#1566d8 70%, #0c3d8c 70%); color: #fff; font-weight: 700; line-height: 17px; text-align: center; border-left: 2px solid #4a97f5; }
.first-file { margin-left: 5px; }
.active { border: 1px solid #7bbfe0; background: #c4e0ee; }
.app-title { margin: 0 0 6px 17px; font-size: 12px; line-height: 16px; font-weight: 400; white-space: nowrap; }
.window-tools { margin-left: auto; display: flex; align-items: center; }
.win { width: 25px; color: #333; }
.first-win { margin-left: 10px; }

/* ribbon tabs */
.tabs { display: flex; background: #d9d9d9; height: 20px; flex: none; }
.tabs button { padding: 0 9px 0 8px; white-space: nowrap; }
.tabs .file-tab { background: #2a7ab5; color: #fff; padding: 0 13px; margin-right: 4px; }
.tabs .current { background: #f4f4f4; }
.tabs .ribbon-toggle { display: flex; align-items: center; gap: 4px; margin-left: 12px; }
.pill { width: 16px; height: 10px; }

/* ribbon */
.ribbon { display: flex; height: 98px; border-bottom: 1px solid #d6d6d6; flex: none; padding-top: 3px; }
.panel { display: flex; flex-direction: column; }
.panel-powered { width: 198px; border-right: 1px solid #dcdcdc; }
.panel-body { display: flex; height: 75px; padding-top: 5px; white-space: nowrap; }
.panel-title { text-align: center; line-height: 18px; }
.big { display: flex; flex-direction: column; align-items: center; line-height: 15px; text-align: center; }
.big .i32 { margin-bottom: 3px; }
.about { width: 44px; } .updates { width: 66px; } .support { width: 86px; }
.configure { width: 94px; margin-left: 8px; }
.gear { padding: 4px; }
.config-drop { padding-top: 47px; width: 8px; margin-right: 6px; margin-left: -4px; }
.stack { display: flex; flex-direction: column; margin-top: -3px; }
.stack-checks { width: 288px; }
.small { display: flex; align-items: center; height: 24px; gap: 5px; white-space: nowrap; }
.word { width: 16px; font-size: 7px; line-height: 8px; text-align: center; color: #000; }
.options-bar { height: 28px; flex: none; border-bottom: 1px solid #b8b8b8; }

/* docks */
.workspace { flex: 1; min-height: 0; display: flex; }
.browser { width: 276px; display: flex; flex-direction: column; border-right: 2px solid #b9b9b9; padding-right: 2px; background: #fff; background-clip: content-box; flex: none; }
.dock-title { display: flex; justify-content: space-between; align-items: center; height: 17px; padding: 0 0 0 2px; background: #d9d9d9; white-space: nowrap; flex: none; }
.long-title { font-size: 11px; }
.dock-title button { color: #777; padding-right: 1px; }
.browser-tabs { display: flex; height: 23px; background: #c9c9c9; flex: none; padding-left: 1px; }
.browser-tabs button { width: 24px; display: flex; align-items: center; justify-content: center; }
.browser-tabs .on { background: #fff; }
.orange { color: #e58a50; }
.search { display: flex; align-items: center; margin: 9px 8px 9px 9px; height: 25px; border: 1px solid #ddd; padding-left: 7px; gap: 7px; }
.search input { flex: 1; min-width: 0; outline: 0; }
.search input::placeholder { color: #aaa; opacity: 1; }
.tree-wrap { flex: 1; min-height: 0; display: flex; padding: 0 0 1px 1px; }
.tree { flex: 1; min-width: 0; overflow: hidden; margin: 0; padding: 0; list-style: none; color: #111; }
.row { display: flex; align-items: center; height: 20px; white-space: nowrap; }
.row span { margin-left: 4px; }
.row.selected { background: #f0f0f0; box-shadow: inset 0 0 0 1px #dcdcdc; }
.open-view { font-weight: 700; }
.tog { width: 12px; height: 12px; margin-right: 2px; flex: none; background: linear-gradient(#777, #777) 2px 5px / 8px 2px no-repeat; }
.tog.root { margin-left: 3px; margin-right: 7px; }
.tog.plus { background: linear-gradient(#888, #888) 2px 5px / 8px 2px no-repeat, linear-gradient(#888, #888) 5px 2px / 2px 8px no-repeat; }
.g1, .g2 { --x: 8px; --w: 9px; flex: none; width: 20px; height: 20px; background-repeat: no-repeat; }
.g2 { --x: 4px; --w: 25px; width: 34px; }
.long { --w: 25px; width: 34px; }
.v { background: repeating-linear-gradient(#b4b4b4 0 3px, transparent 3px 5px) var(--x) 0 / 1px 100% no-repeat; }
.v.h { background: repeating-linear-gradient(#b4b4b4 0 3px, transparent 3px 5px) var(--x) 0 / 1px 100% no-repeat, repeating-linear-gradient(90deg, #b4b4b4 0 3px, transparent 3px 5px) var(--x) 10px / var(--w) 1px no-repeat; }
.end.h { background: repeating-linear-gradient(#b4b4b4 0 3px, transparent 3px 5px) var(--x) 0 / 1px 10px no-repeat, repeating-linear-gradient(90deg, #b4b4b4 0 3px, transparent 3px 5px) var(--x) 10px / var(--w) 1px no-repeat; }
.vbar { width: 17px; background: #e8e8e8; display: flex; flex-direction: column; align-items: center; padding: 4px 0; flex: none; }
.tree-bar { width: 18px; }
.thumb { width: 8px; border-radius: 4px; background: #8c8c8c; }
.tree-thumb { height: 332px; margin-top: 9px; }
.last { margin-top: auto; }

/* document window */
.document { flex: 1; min-width: 0; display: flex; flex-direction: column; }
.doc-tabs { display: flex; justify-content: space-between; height: 20px; background: #cbcbcb; flex: none; }
.doc-tab { display: flex; align-items: center; width: 128px; background: #fff; padding: 0 4px 0 5px; gap: 7px; white-space: nowrap; }
.doc-tab button { margin-left: auto; color: #555; }
.doc-menu { width: 20px; display: flex; align-items: center; justify-content: center; opacity: .6; }
.doc-body { flex: 1; min-height: 0; display: flex; background: #fff; padding-right: 2px; padding-left: 1px; }
.canvas { flex: 1; min-width: 0; overflow: hidden; }
.canvas-thumb { height: 18px; margin-top: 225px; }
.drawing { fill: none; shape-rendering: crispEdges; }
.gridlines path { stroke: #000; stroke-dasharray: 10 2 3 2; }
.levels { stroke: #000; stroke-dasharray: 9 3; }
.w1 { stroke: #000; } .w2 { stroke: #000; stroke-width: 2; } .w3 { stroke: #000; stroke-width: 3; }
.blue { stroke: #1313e0; }
.elevations circle, .elevations path { fill: #fff; stroke: #000; }
.elevations .solid { fill: #000; }
.viewbar { display: flex; height: 17px; align-items: center; margin: 0 2px 1px 2px; flex: none; background: #f4f4f4; }
.viewbar button { width: 26px; height: 17px; display: flex; align-items: center; justify-content: center; }
.viewbar .scale { width: 66px; margin-left: 8px; margin-right: 4px; }
.hbar { flex: 1; display: flex; align-items: center; height: 17px; background: #f0f0f0; margin-left: 3px; }
.htrack { flex: 1; background: #e6e6e6; height: 17px; margin-left: 5px; padding: 4px 0 0 203px; }
.hthumb { display: block; width: 18px; height: 8px; border-radius: 4px; background: #8c8c8c; }

/* properties */
.properties { width: 220px; flex: none; display: flex; flex-direction: column; border-left: 2px solid #b9b9b9; padding-left: 1px; }
.type-box { display: flex; align-items: center; height: 71px; border: 1px solid #b4b4b4; margin: 0 1px; padding: 1px 6px 1px 2px; color: #888; }
.type-thumb { width: 66px; height: 66px; border: 1px solid #b4b4b4; display: flex; align-items: center; justify-content: center; }
.type-box select { flex: 1; padding-left: 4px; color: #3b3b3b; min-width: 0; }
.instance { display: flex; align-items: center; height: 31px; margin: 0 3px 0 1px; gap: 3px; }
.instance-pick { flex: 1; min-width: 0; display: flex; align-items: center; height: 26px; border-bottom: 2px solid #c4c4c4; padding: 0 0 0 4px; }
.instance-pick select { flex: 1; min-width: 0; }
.edit-type { display: flex; align-items: center; gap: 4px; white-space: nowrap; }
.props-wrap { flex: 1; min-height: 0; overflow: hidden; display: flex; padding-left: 1px; background: #fff; }
.props { flex: 1; align-self: flex-start; table-layout: fixed; border-collapse: collapse; color: #000; }
.c-name { width: 93px; } .c-link { width: 12px; }
.props tr { height: 18px; }
.props td { padding: 0 0 0 2px; border-bottom: 1px solid #e8e8e8; border-right: 1px solid #e8e8e8; line-height: 17px; white-space: nowrap; overflow: hidden; }
.props td:first-child { padding-left: 7px; }
.props td:last-child { padding: 0; border-right: 0; }
.props .section th { background: #e4e4e4; text-align: left; padding: 0 0 0 1px; line-height: 18px; color: #222; }
.dbl { width: 8px; height: 10px; margin-left: -2px; }
.props .off { color: #8c8c8c; }
.props input { display: block; width: 100%; height: 17px; border: 1px solid #000; padding: 0 4px; margin-left: -2px; }
.props button { display: block; width: 90px; height: 15px; line-height: 13px; background: #f2f2f2; border: 1px solid #b4b4b4; margin-left: -1px; color: #3b3b3b; }
.props td:last-child button { width: 9px; margin-left: 1px; }
.props-thumb { height: 163px; margin-top: 4px; }

/* status bar */
.status { position: relative; display: flex; align-items: center; height: 25px; flex: none; padding: 1px 0 0 2px; white-space: nowrap; border-top: 1px solid #fff; }
.hint { width: 309px; overflow: hidden; margin-right: 4px; font-size: 11px; }
.pick { display: flex; align-items: center; height: 24px; padding-top: 2px; }
.pick select { flex: 1; min-width: 0; }
.workset { width: 200px; margin-left: 11px; margin-right: 12px; }
.count { display: flex; align-items: center; gap: 3px; }
.requests { width: 52px; }
.st { display: flex; color: #555; margin-right: 10px; }
.gray { color: #999; }
.model { width: 200px; color: #999; }
.model select { opacity: 1; color: #a0a0a0; }
.pale { opacity: .5; }
.editable { margin-left: auto; display: flex; align-items: center; gap: 2px; }
.editable input { appearance: none; width: 12px; height: 12px; border: 1px solid #555; background: #fff; }
.selectors { display: flex; margin-left: 12px; }
.selectors button { width: 26px; display: flex; justify-content: center; }
.filter { margin-left: 4px; gap: 1px; }
.progress { width: 21px; height: 24px; background: #b4dbf0; border: 1px solid #6bb0d8; display: flex; align-items: center; padding-left: 4px; margin-left: 74px; overflow: hidden; }
.tooltip { position: absolute; right: 0; bottom: 21px; height: 42px; padding: 5px 4px 5px 6px; border: 1px solid #777; background: #f0f2f8; color: #555; }
```
